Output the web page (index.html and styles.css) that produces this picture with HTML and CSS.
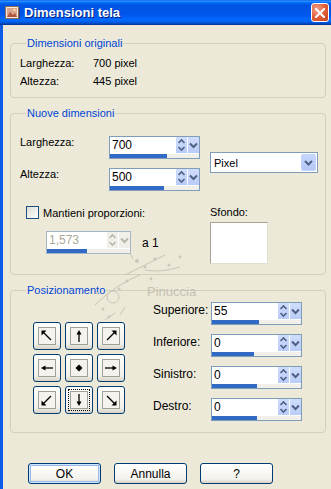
FILE: index.html
```html
<!DOCTYPE html>
<html lang="it">
<head>
  <meta charset="UTF-8" />
  <title>Dimensioni tela</title>
  <link rel="stylesheet" href="styles.css">
</head>
<body>
  <div class="window">
    <div class="titlebar">
      <svg class="app-icon" width="15" height="15" viewBox="0 0 15 15">
        <rect x="0.5" y="1.5" width="13" height="12" fill="#f4eadf" stroke="#8a6a55"/>
        <rect x="2" y="3" width="10" height="9" fill="#d9a58c"/>
        <path d="M2 12 L5 7 L8 10 L10 8 L12 12 Z" fill="#b0563c"/>
        <circle cx="9.5" cy="5" r="1.2" fill="#fbe3a8"/>
        <rect x="14" y="3" width="1" height="11" fill="#2a3f7a"/>
      </svg>
      <span class="title">Dimensioni tela</span>
      <button class="close">
        <svg width="10" height="10" viewBox="0 0 10 10">
          <path d="M1 1 L9 9 M9 1 L1 9" stroke="#fff" stroke-width="2" stroke-linecap="square"/>
        </svg>
      </button>
    </div>

    <div class="client">
      <fieldset class="group group-orig">
        <legend>Dimensioni originali</legend>
        <div class="info-row"><span class="info-label">Larghezza:</span><span>700 pixel</span></div>
        <div class="info-row"><span class="info-label">Altezza:</span><span>445 pixel</span></div>
      </fieldset>

      <fieldset class="group group-new">
        <legend>Nuove dimensioni</legend>
        <div class="size-block">
          <div class="size-fields">
            <div class="field-row">
              <span class="field-label">Larghezza:</span>
              <div class="numbox">
                <div class="numbox-top">
                  <span class="numbox-value">700</span>
                  <span class="spin"><svg width="11" height="16" viewBox="0 0 11 16"><path d="M2.5 6 L5.5 3 L8.5 6 M2.5 10 L5.5 13 L8.5 10" fill="none" stroke="#4d6185" stroke-width="1.6"/></svg></span>
                  <span class="drop"><svg width="11" height="16" viewBox="0 0 11 16"><path d="M2 6.5 L5.5 10 L9 6.5" fill="none" stroke="#4d6185" stroke-width="2"/></svg></span>
                </div>
                <div class="numbox-bar"><div class="numbox-fill" style="width:57px"></div></div>
              </div>
            </div>
            <div class="field-row">
              <span class="field-label">Altezza:</span>
              <div class="numbox">
                <div class="numbox-top">
                  <span class="numbox-value">500</span>
                  <span class="spin"><svg width="11" height="16" viewBox="0 0 11 16"><path d="M2.5 6 L5.5 3 L8.5 6 M2.5 10 L5.5 13 L8.5 10" fill="none" stroke="#4d6185" stroke-width="1.6"/></svg></span>
                  <span class="drop"><svg width="11" height="16" viewBox="0 0 11 16"><path d="M2 6.5 L5.5 10 L9 6.5" fill="none" stroke="#4d6185" stroke-width="2"/></svg></span>
                </div>
                <div class="numbox-bar"><div class="numbox-fill" style="width:54px"></div></div>
              </div>
            </div>
          </div>
          <div class="select">
            <span class="select-value">Pixel</span>
            <span class="select-btn"><svg width="15" height="17" viewBox="0 0 15 17"><path d="M4 7 L7.5 10.5 L11 7" fill="none" stroke="#4d6185" stroke-width="2"/></svg></span>
          </div>
        </div>

        <div class="ratio-block">
          <div class="ratio-left">
            <label class="check"><span class="checkbox"></span>Mantieni proporzioni:</label>
            <div class="ratio-row">
              <div class="numbox numbox-small is-disabled">
                <div class="numbox-top">
                  <span class="numbox-value">1,573</span>
                  <span class="spin"><svg width="11" height="16" viewBox="0 0 11 16"><path d="M2.5 6 L5.5 3 L8.5 6 M2.5 10 L5.5 13 L8.5 10" fill="none" stroke="#b9b6aa" stroke-width="1.6"/></svg></span>
                  <span class="drop"><svg width="11" height="16" viewBox="0 0 11 16"><path d="M2 6.5 L5.5 10 L9 6.5" fill="none" stroke="#b9b6aa" stroke-width="2"/></svg></span>
                </div>
                <div class="numbox-bar"><div class="numbox-fill" style="width:40px"></div></div>
              </div>
              <span class="ratio-text">a 1</span>
            </div>
          </div>
          <div class="bg-col">
            <span class="bg-label">Sfondo:</span>
            <div class="swatch"></div>
          </div>
        </div>
      </fieldset>

      <fieldset class="group group-pos">
        <legend>Posizionamento</legend>
        <div class="pos-body">
          <div class="anchor-grid">
            <button class="anchor"><svg width="18" height="18" viewBox="0 0 18 18"><rect x="0.5" y="0.5" width="17" height="17" fill="#f4f3ee" stroke="#a09f98"/><path d="M13 13 L5 5" stroke="#000" stroke-width="1.3"/><path d="M3.5 3.5 L3.5 8.5 L8.5 3.5 Z" fill="#000"/></svg></button>
            <button class="anchor"><svg width="18" height="18" viewBox="0 0 18 18"><rect x="0.5" y="0.5" width="17" height="17" fill="#f4f3ee" stroke="#a09f98"/><path d="M9 15 L9 6" stroke="#000" stroke-width="1.3"/><path d="M9 3 L6.5 7.5 L11.5 7.5 Z" fill="#000"/></svg></button>
            <button class="anchor"><svg width="18" height="18" viewBox="0 0 18 18"><rect x="0.5" y="0.5" width="17" height="17" fill="#f4f3ee" stroke="#a09f98"/><path d="M5 13 L13 5" stroke="#000" stroke-width="1.3"/><path d="M14.5 3.5 L9.5 3.5 L14.5 8.5 Z" fill="#000"/></svg></button>
            <button class="anchor"><svg width="18" height="18" viewBox="0 0 18 18"><rect x="0.5" y="0.5" width="17" height="17" fill="#f4f3ee" stroke="#a09f98"/><path d="M15 9 L6 9" stroke="#000" stroke-width="1.3"/><path d="M3 9 L7.5 6.5 L7.5 11.5 Z" fill="#000"/></svg></button>
            <button class="anchor"><svg width="18" height="18" viewBox="0 0 18 18"><rect x="0.5" y="0.5" width="17" height="17" fill="#f4f3ee" stroke="#a09f98"/><path d="M9 5.5 L12.5 9 L9 12.5 L5.5 9 Z" fill="#000"/></svg></button>
            <button class="anchor"><svg width="18" height="18" viewBox="0 0 18 18"><rect x="0.5" y="0.5" width="17" height="17" fill="#f4f3ee" stroke="#a09f98"/><path d="M3 9 L12 9" stroke="#000" stroke-width="1.3"/><path d="M15 9 L10.5 6.5 L10.5 11.5 Z" fill="#000"/></svg></button>
            <button class="anchor"><svg width="18" height="18" viewBox="0 0 18 18"><rect x="0.5" y="0.5" width="17" height="17" fill="#f4f3ee" stroke="#a09f98"/><path d="M13 5 L5 13" stroke="#000" stroke-width="1.3"/><path d="M3.5 14.5 L3.5 9.5 L8.5 14.5 Z" fill="#000"/></svg></button>
            <button class="anchor is-focused"><svg width="18" height="18" viewBox="0 0 18 18"><rect x="0.5" y="0.5" width="17" height="17" fill="#f4f3ee" stroke="#a09f98"/><path d="M9 3 L9 12" stroke="#000" stroke-width="1.3"/><path d="M9 15 L6.5 10.5 L11.5 10.5 Z" fill="#000"/></svg></button>
            <button class="anchor"><svg width="18" height="18" viewBox="0 0 18 18"><rect x="0.5" y="0.5" width="17" height="17" fill="#f4f3ee" stroke="#a09f98"/><path d="M5 5 L13 13" stroke="#000" stroke-width="1.3"/><path d="M14.5 14.5 L14.5 9.5 L9.5 14.5 Z" fill="#000"/></svg></button>
          </div>

          <div class="margins">
            <div class="margin-row">
              <span class="margin-label">Superiore:</span>
              <div class="numbox">
                <div class="numbox-top">
                  <span class="numbox-value">55</span>
                  <span class="spin"><svg width="11" height="16" viewBox="0 0 11 16"><path d="M2.5 6 L5.5 3 L8.5 6 M2.5 10 L5.5 13 L8.5 10" fill="none" stroke="#4d6185" stroke-width="1.6"/></svg></span>
                  <span class="drop"><svg width="11" height="16" viewBox="0 0 11 16"><path d="M2 6.5 L5.5 10 L9 6.5" fill="none" stroke="#4d6185" stroke-width="2"/></svg></span>
                </div>
                <div class="numbox-bar"><div class="numbox-fill" style="width:47px"></div></div>
              </div>
            </div>
            <div class="margin-row">
              <span class="margin-label">Inferiore:</span>
              <div class="numbox">
                <div class="numbox-top">
                  <span class="numbox-value">0</span>
                  <span class="spin"><svg width="11" height="16" viewBox="0 0 11 16"><path d="M2.5 6 L5.5 3 L8.5 6 M2.5 10 L5.5 13 L8.5 10" fill="none" stroke="#4d6185" stroke-width="1.6"/></svg></span>
                  <span class="drop"><svg width="11" height="16" viewBox="0 0 11 16"><path d="M2 6.5 L5.5 10 L9 6.5" fill="none" stroke="#4d6185" stroke-width="2"/></svg></span>
                </div>
                <div class="numbox-bar"><div class="numbox-fill" style="width:42px"></div></div>
              </div>
            </div>
            <div class="margin-row">
              <span class="margin-label">Sinistro:</span>
              <div class="numbox">
                <div class="numbox-top">
                  <span class="numbox-value">0</span>
                  <span class="spin"><svg width="11" height="16" viewBox="0 0 11 16"><path d="M2.5 6 L5.5 3 L8.5 6 M2.5 10 L5.5 13 L8.5 10" fill="none" stroke="#4d6185" stroke-width="1.6"/></svg></span>
                  <span class="drop"><svg width="11" height="16" viewBox="0 0 11 16"><path d="M2 6.5 L5.5 10 L9 6.5" fill="none" stroke="#4d6185" stroke-width="2"/></svg></span>
                </div>
                <div class="numbox-bar"><div class="numbox-fill" style="width:45px"></div></div>
              </div>
            </div>
            <div class="margin-row">
              <span class="margin-label">Destro:</span>
              <div class="numbox">
                <div class="numbox-top">
                  <span class="numbox-value">0</span>
                  <span class="spin"><svg width="11" height="16" viewBox="0 0 11 16"><path d="M2.5 6 L5.5 3 L8.5 6 M2.5 10 L5.5 13 L8.5 10" fill="none" stroke="#4d6185" stroke-width="1.6"/></svg></span>
                  <span class="drop"><svg width="11" height="16" viewBox="0 0 11 16"><path d="M2 6.5 L5.5 10 L9 6.5" fill="none" stroke="#4d6185" stroke-width="2"/></svg></span>
                </div>
                <div class="numbox-bar"><div class="numbox-fill" style="width:45px"></div></div>
              </div>
            </div>
          </div>
        </div>
      </fieldset>

      <div class="actions">
        <button class="btn btn-default">OK</button>
        <button class="btn">Annulla</button>
        <button class="btn">?</button>
      </div>
    </div>

    <!-- faint signature watermark over the dialog -->
    <div class="watermark">
      <svg width="130" height="90" viewBox="0 0 130 90">
        <g fill="none" stroke="#c9c5b6" stroke-width="1">
          <circle cx="28" cy="52" r="6"/>
          <path d="M10 60 Q30 40 55 30 M40 30 Q60 20 80 10 M60 25 Q75 28 95 22"/>
          <path d="M20 75 L30 68 M35 70 L40 62 M45 8 L48 14"/>
        </g>
        <g fill="#cbc7b9">
          <circle cx="52" cy="16" r="2"/><circle cx="60" cy="22" r="1.6"/><circle cx="70" cy="14" r="1.8"/>
          <circle cx="84" cy="20" r="1.5"/><circle cx="42" cy="36" r="1.5"/><circle cx="18" cy="64" r="1.5"/>
          <circle cx="24" cy="72" r="1.4"/><circle cx="34" cy="44" r="1.5"/><circle cx="95" cy="12" r="1.4"/>
          <circle cx="12" cy="48" r="1.3"/><circle cx="66" cy="34" r="1.4"/>
        </g>
      </svg>
      <span class="watermark-text">Pinuccia</span>
    </div>
  </div>
</body>
</html>
```

FILE: styles.css
```css
* {
  box-sizing: border-box;
}

body {
  margin: 0;
  width: 331px;
  height: 489px;
  overflow: hidden;
  background-color: #ece9d8;
  font-family: "Liberation Sans", Arial, sans-serif;
  font-size: 11px;
  color: #000;
}

.window {
  position: relative;
  height: 489px;
  display: flex;
  flex-direction: column;
}

/* title bar */
.titlebar {
  height: 25px;
  display: flex;
  align-items: center;
  padding-left: 5px;
  background: linear-gradient(to bottom, #0058ee 0%, #3593ff 4%, #288eff 6%, #127dff 8%, #036ffc 10%, #0262ee 14%, #0057e5 20%, #0054e3 24%, #0055eb 56%, #005bf5 66%, #026afe 76%, #0062ef 86%, #0052d6 92%, #0040ab 96%, #003092 100%);
  color: #fff;
}

.app-icon {
  flex: none;
}

.title {
  margin-left: 4px;
  font-weight: bold;
  font-size: 13px;
  text-shadow: 1px 1px 0 #0a1e7a;
}

.close {
  margin-left: auto;
  margin-right: 2px;
  width: 18px;
  height: 19px;
  padding: 0;
  border: 1px solid #fff;
  border-radius: 3px;
  background: radial-gradient(circle at 30% 30%, #f0a08a, #e2603b 50%, #c4401a);
  display: flex;
  align-items: center;
  justify-content: center;
}

.client {
  flex: 1;
  border-left: 3px solid #0b5be6;
}

/* group boxes */
.group {
  border: 1px solid #d0d0bf;
  border-radius: 4px;
  margin: 0 5px 0 7px;
  padding: 0;
  min-width: 0;
}

.group legend {
  margin-left: 6px;
  padding: 0 1px;
  line-height: 14px;
  color: #0046d5;
}

.group-orig {
  margin-top: 11px;
  padding: 4px 0 7px 9px;
}

.group-new {
  margin-top: 8px;
  padding: 16px 0 10px 9px;
}

.group-pos {
  margin-top: 8px;
  padding: 5px 0 11px 9px;
}

.info-row {
  display: flex;
  align-items: center;
  height: 18px;
}

.info-label {
  width: 73px;
}

/* new size */
.size-block {
  display: flex;
  align-items: flex-start;
}

.size-fields {
  display: flex;
  flex-direction: column;
  gap: 9px;
}

.field-row {
  display: flex;
  align-items: flex-start;
}

.field-label {
  width: 89px;
  line-height: 12px;
}

.select {
  margin: 16px 0 0 10px;
  width: 108px;
  height: 21px;
  border: 1px solid #7f9db9;
  background: #fff;
  display: flex;
  align-items: center;
  padding: 1px;
}

.select-value {
  flex: 1;
  padding-left: 2px;
}

.select-btn {
  width: 15px;
  height: 17px;
  border-radius: 2px;
  background: linear-gradient(to bottom, #c6d5fd, #b4c8f6);
  border: 1px solid #c3d3fd;
  display: flex;
  align-items: center;
  justify-content: center;
}

.select-btn svg {
  flex: none;
}

/* numeric edit with slider bar */
.numbox {
  width: 91px;
  height: 23px;
  border: 1px solid #7f9db9;
  background: #fff;
  display: flex;
  flex-direction: column;
}

.numbox-top {
  height: 16px;
  display: flex;
  align-items: center;
}

.numbox-value {
  flex: 1;
  padding-left: 2px;
  font-size: 12px;
}

.spin,
.drop {
  width: 11px;
  height: 16px;
  background: linear-gradient(to bottom, #d0ddfc, #b9cbf7);
  display: flex;
}

.drop {
  margin-left: 1px;
}

.numbox-bar {
  margin-top: 1px;
  height: 4px;
  background: #f1efe7;
}

.numbox-fill {
  height: 4px;
  background: #316ac5;
}

.numbox-small {
  width: 85px;
}

.is-disabled {
  border-color: #a5b6c9;
}

.is-disabled .numbox-value {
  color: #aca899;
}

.is-disabled .spin,
.is-disabled .drop {
  background: #f0efe9;
}

/* keep proportions */
.ratio-block {
  display: flex;
  margin-top: 15px;
}

.ratio-left {
  width: 190px;
}

.check {
  display: flex;
  align-items: center;
  height: 13px;
  margin-left: 6px;
}

.checkbox {
  width: 13px;
  height: 13px;
  border: 1px solid #1c5180;
  background: linear-gradient(135deg, #dcdcd7, #fff);
  margin-right: 4px;
}

.ratio-row {
  display: flex;
  align-items: center;
  margin: 12px 0 0 26px;
}

.ratio-text {
  margin-left: 11px;
  font-size: 12px;
}

.bg-col {
  display: flex;
  flex-direction: column;
}

.bg-label {
  line-height: 13px;
}

.swatch {
  margin-top: 3px;
  width: 58px;
  height: 42px;
  background: #fff;
  border: 1px solid #a5a296;
  border-right-color: #e2dfd2;
  border-bottom-color: #e2dfd2;
}

/* positioning */
.pos-body {
  display: flex;
  align-items: flex-start;
}

.anchor-grid {
  margin: 20px 0 0 13px;
  display: grid;
  grid-template-columns: repeat(3, 28px);
  grid-auto-rows: 28px;
  gap: 4px;
}

.anchor {
  padding: 0;
  border: 1px solid #003c74;
  border-radius: 3px;
  background: linear-gradient(to bottom, #fff, #f1f0ea 80%, #d8d2c6);
  display: flex;
  align-items: center;
  justify-content: center;
}

.is-focused {
  outline: 1px dotted #000;
  outline-offset: -4px;
}

.margins {
  margin-left: 28px;
  display: flex;
  flex-direction: column;
  gap: 9px;
}

.margin-row {
  display: flex;
  align-items: flex-start;
}

.margin-label {
  width: 58px;
  line-height: 17px;
  font-size: 12px;
}

/* bottom buttons */
.actions {
  display: flex;
  gap: 13px;
  margin: 30px 0 0 25px;
}

.btn {
  width: 73px;
  height: 21px;
  padding: 0;
  border: 1px solid #003c74;
  border-radius: 3px;
  background: linear-gradient(to bottom, #fff, #f3f2ec 80%, #d6d0c5);
  font-family: inherit;
  font-size: 12px;
  color: #000;
}

.btn-default {
  box-shadow: inset 0 0 0 1px #cee7ff, inset 0 0 0 2px #98b8ea;
}

/* watermark */
.watermark {
  position: absolute;
  left: 85px;
  top: 245px;
  pointer-events: none;
}

.watermark-text {
  position: absolute;
  left: 62px;
  top: 39px;
  font-size: 13px;
  color: #c5c1b2;
}
```
